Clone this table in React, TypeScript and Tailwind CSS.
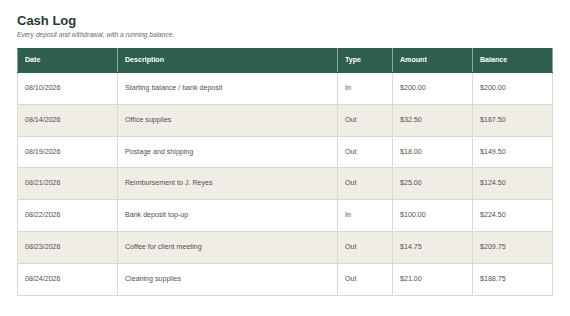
const rows = [
  { date: '08/10/2026', desc: 'Starting balance / bank deposit', type: 'In', amount: '$200.00', balance: '$200.00' },
  { date: '08/14/2026', desc: 'Office supplies', type: 'Out', amount: '$32.50', balance: '$167.50' },
  { date: '08/19/2026', desc: 'Postage and shipping', type: 'Out', amount: '$18.00', balance: '$149.50' },
  { date: '08/21/2026', desc: 'Reimbursement to J. Reyes', type: 'Out', amount: '$25.00', balance: '$124.50' },
  { date: '08/22/2026', desc: 'Bank deposit top-up', type: 'In', amount: '$100.00', balance: '$224.50' },
  { date: '08/23/2026', desc: 'Coffee for client meeting', type: 'Out', amount: '$14.75', balance: '$209.75' },
  { date: '08/24/2026', desc: 'Cleaning supplies', type: 'Out', amount: '$21.00', balance: '$188.75' },
];

const cols = ['w-[100px]', 'w-[220px]', 'w-[55px]', 'w-[80px]', 'w-[80px]'];

export default function App() {
  return (
    <div className="w-[570px] h-[316px] bg-white px-[17px] pt-[13px] font-['Liberation_Sans',Arial,sans-serif] opacity-[0.995]">
      <h1 className="text-[13px] leading-[16px] font-bold text-[#1f3b31]">Cash Log</h1>
      <p className="text-[6.6px] leading-[9px] italic text-[#6b6b6b] mt-[1px]">
        Every deposit and withdrawal, with a running balance.
      </p>

      <table className="mt-[9px] w-[536px] border-collapse table-fixed text-[7.1px] text-[#505050]">
        <colgroup>
          {cols.map((c, i) => (
            <col key={i} className={c} />
          ))}
        </colgroup>
        <thead>
          <tr className="bg-[#2d5e4e] h-[24px]">
            {['Date', 'Description', 'Type', 'Amount', 'Balance'].map((h) => (
              <th
                key={h}
                className="text-left text-white font-bold px-[7px] border-x border-x-[#8ba89d] border-y border-y-[#2d5e4e]"
              >
                {h}
              </th>
            ))}
          </tr>
        </thead>
        <tbody>
          {rows.map((r, i) => (
            <tr key={r.date} className={i % 2 === 1 ? 'h-[31.8px] bg-[#f0ede6]' : 'h-[31.8px] bg-white'}>
              <td className="px-[7px] border border-[#dcd9d0]">{r.date}</td>
              <td className="px-[7px] border border-[#dcd9d0]">{r.desc}</td>
              <td className="px-[7px] border border-[#dcd9d0]">{r.type}</td>
              <td className="px-[7px] border border-[#dcd9d0]">{r.amount}</td>
              <td className="px-[7px] border border-[#dcd9d0]">{r.balance}</td>
            </tr>
          ))}
        </tbody>
      </table>
    </div>
  );
}
